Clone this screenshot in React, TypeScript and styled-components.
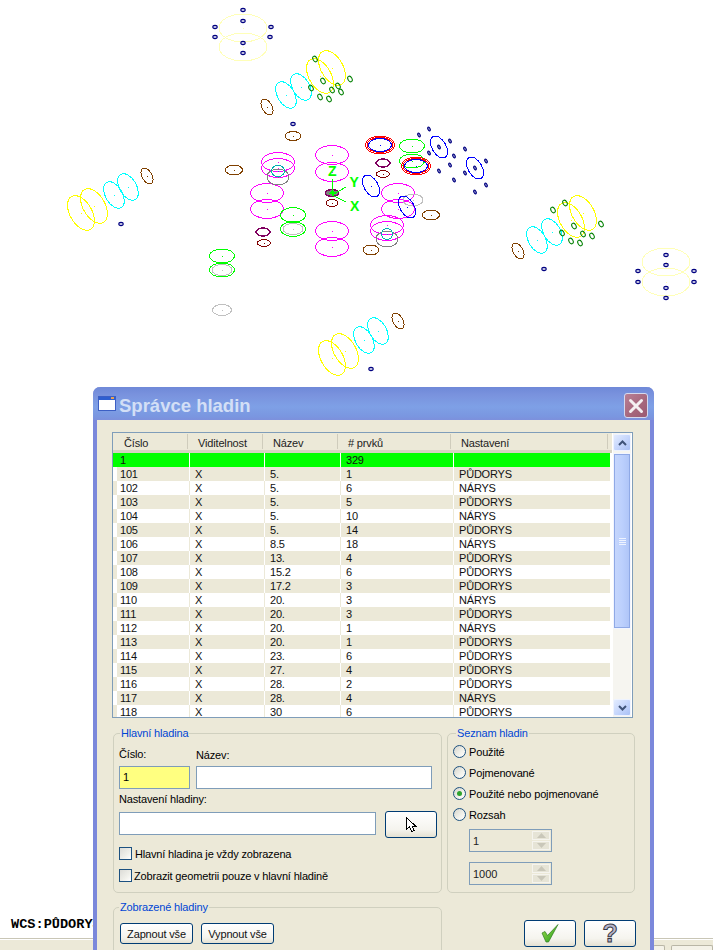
import styled, { createGlobalStyle } from "styled-components";

const GlobalStyle = createGlobalStyle`
  html, body {
    margin: 0;
    padding: 0;
    background: #ffffff;
  }
  * {
    box-sizing: border-box;
  }
`;

const UI_FONT = `"Liberation Sans", Arial, sans-serif`;
const TAN = "#ece9d8";
const FIELD_BORDER = "#7f9db9";

const Screen = styled.div`
  position: relative;
  width: 713px;
  height: 950px;
  overflow: hidden;
  display: flex;
  flex-direction: column;
  background: #ffffff;
  font-family: ${UI_FONT};
`;

const Viewport = styled.div`
  position: relative;
  height: 938px;
  flex: none;
`;

const WcsLabel = styled.div`
  position: absolute;
  left: 11px;
  top: 917px;
  font-family: "Liberation Mono", monospace;
  font-weight: bold;
  font-size: 13.6px;
  line-height: 15px;
  color: #000000;
  white-space: nowrap;
`;

const TabStrip = styled.div`
  flex: 1;
  display: flex;
  align-items: flex-end;
  gap: 6px;
  padding-left: 653px;
  background: ${TAN};
  border-top: 1px solid #c9c6b6;
  box-shadow: inset 0 1px 0 #ffffff;
`;

const StripTab = styled.div<{ $width: number }>`
  width: ${({ $width }) => $width}px;
  height: 5px;
  border: 1px solid #b9b6a6;
  border-bottom: none;
  border-radius: 2px 2px 0 0;
  background: #f4f2e8;
`;

const Dialog = styled.div`
  position: absolute;
  left: 93px;
  top: 387px;
  width: 561px;
  height: 590px;
  display: flex;
  flex-direction: column;
  border: 4px solid #7b88db;
  border-top: none;
  border-radius: 7px 7px 0 0;
  background: ${TAN};
  color: #000000;
  font-size: 11px;
  letter-spacing: -0.16px;
`;

const TitleBar = styled.div`
  flex: none;
  height: 33px;
  margin: 0 -4px;
  padding: 0 6px 0 5px;
  display: flex;
  align-items: center;
  border-radius: 7px 7px 0 0;
  background: linear-gradient(180deg, #6f89d8 0%, #7a93de 25%, #7ea0e6 60%, #7a96e0 90%, #7d90dc 100%);
`;

const TitleText = styled.div`
  flex: 1;
  margin-left: 3px;
  padding-top: 5px;
  font-size: 18.5px;
  font-weight: bold;
  letter-spacing: 0;
  color: #d3dff6;
`;

const CloseButton = styled.div`
  width: 24px;
  height: 25px;
  margin-top: 4px;
  display: flex;
  align-items: center;
  justify-content: center;
  border: 1px solid #d5d9ee;
  border-radius: 3px;
  background: linear-gradient(135deg, #b98095 0%, #a5667c 60%, #9a5a72 100%);
`;

const Body = styled.div`
  flex: 1;
  padding: 12px 17px 0 15px;
  display: flex;
  flex-direction: column;
`;

const ListPane = styled.div`
  flex: none;
  height: 286px;
  display: flex;
  border: 1px solid ${FIELD_BORDER};
  background: #ffffff;
`;

const ListTable = styled.div`
  flex: none;
  width: 499px;
  display: flex;
  flex-direction: column;
  overflow: hidden;
`;

const ListHead = styled.div`
  flex: none;
  height: 20px;
  display: grid;
  grid-template-columns: 75px 75px 75px 113px 157px;
  background: ${TAN};
  border-bottom: 3px solid #d6d3c3;
`;

const HeadCell = styled.div<{ $pad: number }>`
  height: 15px;
  margin-top: 1px;
  padding-left: ${({ $pad }) => $pad}px;
  padding-top: 2px;
  font-size: 11px;
  line-height: 14px;
  color: #222222;
  border-right: 1px solid #cfccbc;
`;

const ListRows = styled.div`
  flex: 1;
  overflow: hidden;
`;

const Row = styled.div<{ $bg: string; $sep: string; $lead: string }>`
  height: 14px;
  width: 497px;
  display: grid;
  grid-template-columns: 76px 75px 76px 113px 157px;
  background: ${({ $bg }) => $bg};
  font-size: 11px;
  letter-spacing: -0.2px;
  line-height: 14px;
  color: #111111;
  & > div {
    border-left: 1px solid ${({ $sep }) => $sep};
    padding-left: 5px;
    white-space: nowrap;
  }
  & > div:first-child {
    border-left: 4px solid ${({ $lead }) => $lead};
    padding-left: 3px;
  }
`;

const ScrollBar = styled.div`
  flex: 1;
  margin-left: 1px;
  margin-right: 1px;
  padding: 1px 0;
  display: flex;
  flex-direction: column;
  background: #f6f5f0;
`;

const ScrollButton = styled.div`
  flex: none;
  height: 17px;
  display: flex;
  align-items: center;
  justify-content: center;
  border: 1px solid #eef3ff;
  border-radius: 2px;
  background: linear-gradient(135deg, #e2ebfe 0%, #c4d5fc 55%, #a9c0f5 100%);
`;

const ScrollThumb = styled.div`
  flex: none;
  height: 176px;
  margin-top: 2px;
  display: flex;
  flex-direction: column;
  align-items: center;
  justify-content: center;
  gap: 1px;
  border: 1px solid #f2f5ff;
  outline: 1px solid #8fa9e6;
  outline-offset: -2px;
  background: linear-gradient(90deg, #c6d6fc 0%, #bcd0fd 50%, #aec4f7 100%);
`;

const GripLine = styled.div`
  width: 7px;
  height: 1px;
  background: #eef3ff;
`;

const ScrollTrack = styled.div`
  flex: 1;
`;

const GroupRow = styled.div`
  flex: none;
  margin-top: 15px;
  padding-left: 1px;
  display: grid;
  grid-template-columns: 329px 188px;
  column-gap: 5px;
`;

const Group = styled.div<{ $height: number }>`
  position: relative;
  height: ${({ $height }) => $height}px;
  border: 1px solid #d0d0bf;
  border-radius: 5px;
`;

const GroupTitle = styled.div<{ $left: number }>`
  position: absolute;
  top: -8px;
  left: ${({ $left }) => $left}px;
  padding: 0 1px;
  background: ${TAN};
  color: #0046d5;
  line-height: 14px;
  white-space: nowrap;
`;

const MainGroupBody = styled.div`
  padding: 13px 0 0 5px;
  display: flex;
  flex-direction: column;
`;

const NameGrid = styled.div`
  display: grid;
  grid-template-columns: 71px 236px;
  column-gap: 6px;
`;

const FieldLabel = styled.div<{ $top?: number }>`
  height: 19px;
  padding-top: ${({ $top }) => $top ?? 0}px;
  line-height: 14px;
  white-space: nowrap;
`;

const TextField = styled.div<{ $bg?: string }>`
  height: 23px;
  padding-left: 3px;
  border: 1px solid ${FIELD_BORDER};
  background: ${({ $bg }) => $bg ?? "#ffffff"};
  line-height: 21px;
`;

const SettingsLabel = styled.div`
  margin-top: 3px;
  height: 20px;
  line-height: 14px;
`;

const SettingsRow = styled.div`
  display: flex;
  align-items: flex-start;
  gap: 9px;
  height: 27px;
  margin-top: -1px;
  & > ${TextField} {
    width: 257px;
    margin-top: 1px;
  }
`;

const XpButton = styled.div<{ $width: number; $height: number }>`
  width: ${({ $width }) => $width}px;
  height: ${({ $height }) => $height}px;
  flex: none;
  display: flex;
  align-items: center;
  justify-content: center;
  border: 1px solid #003c74;
  border-radius: 3px;
  background: linear-gradient(180deg, #ffffff 0%, #f5f4ee 70%, #e4e1d2 100%);
  color: #111111;
  white-space: nowrap;
`;

const HelpGlyph = styled.span`
  font-size: 25px;
  font-weight: bold;
  line-height: 25px;
  color: #b4b4cc;
  -webkit-text-stroke: 1px #3a3a44;
`;

const CheckList = styled.div`
  margin-top: 9px;
  display: flex;
  flex-direction: column;
  gap: 9px;
`;

const CheckRow = styled.div<{ $gap: number }>`
  height: 13px;
  display: flex;
  align-items: center;
  gap: ${({ $gap }) => $gap}px;
  white-space: nowrap;
`;

const CheckBox = styled.div`
  width: 13px;
  height: 13px;
  flex: none;
  border: 1px solid #1c5180;
  background: linear-gradient(135deg, #dcdcd7 0%, #f0f0ea 60%, #ffffff 100%);
`;

const ListGroupBody = styled.div`
  padding: 7px 0 0 5px;
  display: flex;
  flex-direction: column;
`;

const RadioRow = styled.div`
  height: 21px;
  display: flex;
  align-items: center;
  gap: 3px;
  white-space: nowrap;
`;

const RadioDot = styled.div<{ $on?: boolean }>`
  width: 13px;
  height: 13px;
  flex: none;
  display: flex;
  align-items: center;
  justify-content: center;
  border: 1px solid #1c5180;
  border-radius: 50%;
  background: linear-gradient(135deg, #d4d4cc 0%, #f2f2ec 60%, #ffffff 100%);
  &::after {
    content: "";
    display: ${({ $on }) => ($on ? "block" : "none")};
    width: 5px;
    height: 5px;
    border-radius: 50%;
    background: #2ea32e;
  }
`;

const SpinStack = styled.div`
  margin: 4px 0 0 16px;
  display: flex;
  flex-direction: column;
  gap: 10px;
`;

const SpinField = styled.div`
  width: 83px;
  height: 23px;
  display: flex;
  align-items: center;
  padding: 1px;
  border: 1px solid ${FIELD_BORDER};
  letter-spacing: 0;
  color: #222222;
`;

const SpinValue = styled.div`
  flex: 1;
  padding-left: 2px;
`;

const SpinButtons = styled.div`
  width: 18px;
  height: 19px;
  display: flex;
  flex-direction: column;
  gap: 1px;
`;

const SpinButton = styled.div`
  flex: 1;
  display: flex;
  align-items: center;
  justify-content: center;
  border: 1px solid #f5f4ee;
  background: #e6e4d6;
`;

const BottomRow = styled.div`
  flex: none;
  margin-top: 14px;
  padding-left: 1px;
  display: grid;
  grid-template-columns: 329px 188px;
  column-gap: 5px;
`;

const ToggleRow = styled.div`
  padding: 15px 0 0 6px;
  display: flex;
  gap: 8px;
`;

const ActionRow = styled.div`
  padding: 13px 0 0 77px;
  display: flex;
  gap: 8px;
`;

// cad drawing data, all in screen pixels
type Oval = [number, number, number, number, string, number?];

const YELLOW = "#ffff00";
const PALE = "#ffffb8";
const CYAN = "#00ffff";
const BROWN = "#804000";
const MAGENTA = "#ff00ff";
const LIME = "#00ff00";
const NAVY = "#000080";
const GREEN = "#008000";
const GREY = "#c0c0c0";
const MID = "#808080";
const TEAL = "#00b0b0";
const PURPLE = "#800060";
const MAROON = "#800000";
const RED = "#ff0000";
const BLUE = "#0000ff";

const bigTilted = (cx: number, cy: number, c: string): Oval => [cx, cy, 11, 19, c, -30];
const midTilted = (cx: number, cy: number, c: string): Oval => [cx, cy, 8.5, 14.5, c, -30];
const smallTilted = (cx: number, cy: number, c: string): Oval => [cx, cy, 5, 8.7, c, -30];
const blueTilted = (cx: number, cy: number): Oval => [cx, cy, 7, 12, BLUE, -30];

const OVALS: Oval[] = [
  [243, 28, 24, 14, PALE],
  [243, 47, 24, 14, PALE],
  [666, 262, 24, 14, PALE],
  [666, 282, 24, 14, PALE],
  bigTilted(332, 68, YELLOW),
  bigTilted(320, 76, YELLOW),
  midTilted(286, 95, CYAN),
  midTilted(301, 87, CYAN),
  smallTilted(267, 107, BROWN),
  bigTilted(81, 213, YELLOW),
  bigTilted(94, 206, YELLOW),
  midTilted(114, 195, CYAN),
  midTilted(128, 187, CYAN),
  smallTilted(147, 176, BROWN),
  bigTilted(332, 358, YELLOW),
  bigTilted(345, 351, YELLOW),
  midTilted(364, 340, CYAN),
  midTilted(378, 331, CYAN),
  smallTilted(398, 321, BROWN),
  bigTilted(571, 220, YELLOW),
  bigTilted(583, 213, YELLOW),
  midTilted(537, 240, CYAN),
  midTilted(552, 232, CYAN),
  smallTilted(518, 251, BROWN),
  [293, 136, 8, 4.5, BROWN],
  [234, 170, 8.5, 5, BROWN],
  [431, 215, 8.5, 5, BROWN],
  [371, 250, 8, 5, BROWN],
  [278, 162, 16.5, 9.5, MAGENTA],
  [278, 168, 16.5, 9.5, MAGENTA],
  [267, 193, 16.5, 9.5, MAGENTA],
  [267, 209, 16.5, 9.5, MAGENTA],
  [332, 155, 16.5, 9.5, MAGENTA],
  [332, 172, 16.5, 9.5, MAGENTA],
  [332, 231, 16.5, 9.5, MAGENTA],
  [332, 247, 16.5, 9.5, MAGENTA],
  [398, 193, 16.5, 9.5, MAGENTA],
  [398, 209, 16.5, 9.5, MAGENTA],
  [387, 225, 16.5, 9.5, MAGENTA],
  [387, 231, 16.5, 9.5, MAGENTA],
  [278, 177, 11, 8, MID],
  [278, 171, 6.5, 5.5, TEAL],
  [387, 239, 11, 8, MID],
  [387, 234, 5.5, 5.5, TEAL],
  [293, 215, 12.5, 7.5, LIME],
  [293, 229, 12.5, 7.5, LIME],
  [293, 229, 10, 5.5, GREY],
  [222, 256, 12.5, 7, LIME],
  [222, 270, 12.5, 7, LIME],
  [222, 270, 10, 5.5, GREY],
  [222, 310, 9.5, 5.5, GREY],
  [412, 146, 12.5, 7, LIME],
  [412, 161, 12.5, 7, LIME],
  [413, 200, 10, 6, GREY],
  [264, 243, 6.5, 3.5, MAROON],
  [383, 174, 6.5, 3.5, MAROON],
  [332, 203, 6, 3.5, MAROON],
  [380, 145, 14.5, 9, RED],
  [380, 145, 13, 7.5, RED],
  [380, 145, 11.5, 6.5, BLUE],
  [416, 166, 14.5, 9, RED],
  [416, 166, 13, 7.5, RED],
  [416, 166, 11.5, 6.5, BLUE],
  blueTilted(439, 147),
  blueTilted(475, 168),
  blueTilted(371, 186),
  blueTilted(407, 207),
];

const THICK: Oval[] = [
  [263, 232, 7, 4, PURPLE],
  [383, 163, 7, 4, PURPLE],
];

const EYES: [number, number][] = [
  [243, 10], [243, 21], [215, 27], [271, 27], [215, 37], [270, 37], [243, 43], [243, 53],
  [666, 255], [666, 265], [638, 271], [694, 271], [638, 282], [694, 282], [666, 288], [666, 298],
  [293, 124], [121, 224], [371, 369], [544, 269],
];

const SEEDS: [number, number][] = [
  [315, 59], [350, 79], [323, 81], [311, 88], [332, 90], [338, 86], [341, 92], [320, 97], [329, 99],
  [565, 203], [553, 210], [601, 224], [574, 226], [562, 233], [583, 234], [592, 236], [571, 241], [580, 243],
];

const BOLTS: [number, number][] = [
  [429, 129], [419, 135], [450, 141], [429, 153], [454, 156], [465, 149], [450, 165], [486, 161],
  [439, 171], [465, 173], [454, 180], [486, 185], [475, 192], [439, 147], [475, 168],
];

const CadDrawing = () => (
  <svg width="713" height="938" viewBox="0 0 713 938" shapeRendering="crispEdges" style={{ display: "block" }}>
    {OVALS.map(([cx, cy, rx, ry, color, tilt], i) => (
      <g key={i}>
        <ellipse
          cx={cx}
          cy={cy}
          rx={rx}
          ry={ry}
          fill="none"
          stroke={color}
          transform={tilt ? `rotate(${tilt} ${cx} ${cy})` : undefined}
        />
        <rect x={Math.round(cx)} y={Math.round(cy)} width="1" height="1" fill={color} />
      </g>
    ))}
    {THICK.map(([cx, cy, rx, ry, color], i) => (
      <ellipse key={i} cx={cx} cy={cy} rx={rx} ry={ry} fill="none" stroke={color} strokeWidth="1.5" />
    ))}
    <g shapeRendering="auto">
      {EYES.map(([cx, cy], i) => (
        <ellipse key={i} cx={cx} cy={cy} rx="2.2" ry="1.6" fill="#d0d0e8" stroke={NAVY} strokeWidth="1.1" />
      ))}
      {SEEDS.map(([cx, cy], i) => (
        <ellipse key={i} cx={cx} cy={cy} rx="2" ry="3" fill="none" stroke={GREEN} transform={`rotate(-30 ${cx} ${cy})`} />
      ))}
      {BOLTS.map(([cx, cy], i) => (
        <ellipse key={i} cx={cx} cy={cy} rx="1.2" ry="2" fill="#8080c0" stroke={NAVY} transform={`rotate(-30 ${cx} ${cy})`} />
      ))}
    </g>
    <ellipse cx="332" cy="193" rx="6.5" ry="3.5" fill={MID} stroke={PURPLE} strokeWidth="1.5" />
    <path d="M332 179V195M332 195L346 187M332 195L346 202" fill="none" stroke={LIME} />
    <path d="M332 190L329 194H336Z" fill={LIME} />
    <text x="328" y="175.5" fill={LIME} fontFamily={UI_FONT} fontWeight="bold" fontSize="14">Z</text>
    <text x="349.5" y="187" fill={LIME} fontFamily={UI_FONT} fontWeight="bold" fontSize="14">Y</text>
    <text x="350" y="211" fill={LIME} fontFamily={UI_FONT} fontWeight="bold" fontSize="14">X</text>
  </svg>
);

const WindowIcon = () => (
  <svg width="18" height="15" viewBox="0 0 18 15">
    <rect x="0.5" y="0.5" width="17" height="14" fill="#ffffff" stroke="#3c5fc4" />
    <rect x="1" y="1" width="16" height="3" fill="#2f5fd0" />
    <rect x="13" y="1" width="3" height="2" fill="#e8a050" />
  </svg>
);

const CloseIcon = () => (
  <svg width="16" height="16" viewBox="0 0 16 16">
    <path d="M2.5 2.5L13.5 13.5M13.5 2.5L2.5 13.5" stroke="#f4f0f2" strokeWidth="3" strokeLinecap="round" />
  </svg>
);

const Chevron = ({ down }: { down?: boolean }) => (
  <svg width="9" height="6" viewBox="0 0 9 6">
    <path d={down ? "M1 1L4.5 4.5L8 1" : "M1 5L4.5 1.5L8 5"} fill="none" stroke="#3f5378" strokeWidth="2" />
  </svg>
);

const SpinArrow = ({ down }: { down?: boolean }) => (
  <svg width="9" height="5" viewBox="0 0 9 5">
    <path d={down ? "M0 0H9L4.5 5Z" : "M0 5H9L4.5 0Z"} fill="#c9c7b9" />
  </svg>
);

const PickCursor = () => (
  <svg width="11" height="16" viewBox="0 0 11 16" shapeRendering="crispEdges">
    <path d="M0.5 0.5V12.5L3.5 9.5L5.5 14.5L8 13.5L6 9H9.5Z" fill="#ffffff" stroke="#000000" />
  </svg>
);

const OkIcon = () => (
  <svg width="18" height="19" viewBox="0 0 18 19">
    <defs>
      <linearGradient id="okFill" x1="0" y1="0" x2="1" y2="1">
        <stop offset="0" stopColor="#a4e04a" />
        <stop offset="1" stopColor="#1f9a1f" />
      </linearGradient>
    </defs>
    <path d="M1 9L4 7.5L6.5 11.5L17 0.5L7.5 18H5Z" fill="url(#okFill)" stroke="#2e7d20" strokeWidth="0.7" />
  </svg>
);

type LayerRow = [string, string, string, string];

const LAYERS: LayerRow[] = [
  ["101", "5.", "1", "PŮDORYS"],
  ["102", "5.", "6", "NÁRYS"],
  ["103", "5.", "5", "PŮDORYS"],
  ["104", "5.", "10", "NÁRYS"],
  ["105", "5.", "14", "PŮDORYS"],
  ["106", "8.5", "18", "NÁRYS"],
  ["107", "13.", "4", "PŮDORYS"],
  ["108", "15.2", "6", "PŮDORYS"],
  ["109", "17.2", "3", "PŮDORYS"],
  ["110", "20.", "3", "NÁRYS"],
  ["111", "20.", "3", "PŮDORYS"],
  ["112", "20.", "1", "NÁRYS"],
  ["113", "20.", "1", "PŮDORYS"],
  ["114", "23.", "6", "PŮDORYS"],
  ["115", "27.", "4", "PŮDORYS"],
  ["116", "28.", "2", "PŮDORYS"],
  ["117", "28.", "4", "NÁRYS"],
  ["118", "30", "6", "PŮDORYS"],
];

const COLUMNS: [string, number][] = [
  ["Číslo", 11],
  ["Viditelnost", 10],
  ["Název", 10],
  ["# prvků", 10],
  ["Nastavení", 10],
];

const RADIOS = ["Použité", "Pojmenované", "Použité nebo pojmenované", "Rozsah"];

export default function App() {
  return (
    <Screen>
      <GlobalStyle />
      <Viewport>
        <CadDrawing />
        <WcsLabel>WCS:PŮDORYS</WcsLabel>
      </Viewport>
      <TabStrip>
        <StripTab $width={12} />
        <StripTab $width={42} />
      </TabStrip>

      <Dialog>
        <TitleBar>
          <WindowIcon />
          <TitleText>Správce hladin</TitleText>
          <CloseButton>
            <CloseIcon />
          </CloseButton>
        </TitleBar>
        <Body>
          <ListPane>
            <ListTable>
              <ListHead>
                {COLUMNS.map(([label, pad]) => (
                  <HeadCell key={label} $pad={pad}>
                    {label}
                  </HeadCell>
                ))}
              </ListHead>
              <ListRows>
                <Row $bg="#00ff00" $sep="#ffffff" $lead="#00ff00">
                  <div>1</div>
                  <div />
                  <div />
                  <div>329</div>
                  <div />
                </Row>
                {LAYERS.map(([num, name, count, setting], i) => (
                  <Row
                    key={num}
                    $bg={i % 2 ? "#ffffff" : TAN}
                    $sep={i % 2 ? TAN : "#ffffff"}
                    $lead={i % 2 ? TAN : "#ffffff"}
                  >
                    <div>{num}</div>
                    <div>X</div>
                    <div>{name}</div>
                    <div>{count}</div>
                    <div>{setting}</div>
                  </Row>
                ))}
              </ListRows>
            </ListTable>
            <ScrollBar>
              <ScrollButton>
                <Chevron />
              </ScrollButton>
              <ScrollThumb>
                <GripLine />
                <GripLine />
                <GripLine />
                <GripLine />
              </ScrollThumb>
              <ScrollTrack />
              <ScrollButton>
                <Chevron down />
              </ScrollButton>
            </ScrollBar>
          </ListPane>

          <GroupRow>
            <Group $height={160}>
              <GroupTitle $left={6}>Hlavní hladina</GroupTitle>
              <MainGroupBody>
                <NameGrid>
                  <FieldLabel>Číslo:</FieldLabel>
                  <FieldLabel $top={1}>Název:</FieldLabel>
                  <TextField $bg="#ffff80">1</TextField>
                  <TextField />
                </NameGrid>
                <SettingsLabel>Nastavení hladiny:</SettingsLabel>
                <SettingsRow>
                  <TextField />
                  <XpButton $width={52} $height={27}>
                    <PickCursor />
                  </XpButton>
                </SettingsRow>
                <CheckList>
                  <CheckRow $gap={3}>
                    <CheckBox />
                    Hlavní hladina je vždy zobrazena
                  </CheckRow>
                  <CheckRow $gap={2}>
                    <CheckBox />
                    Zobrazit geometrii pouze v hlavní hladině
                  </CheckRow>
                </CheckList>
              </MainGroupBody>
            </Group>

            <Group $height={160}>
              <GroupTitle $left={8}>Seznam hladin</GroupTitle>
              <ListGroupBody>
                {RADIOS.map((label, i) => (
                  <RadioRow key={label}>
                    <RadioDot $on={i === 2} />
                    {label}
                  </RadioRow>
                ))}
                <SpinStack>
                  {["1", "1000"].map((value) => (
                    <SpinField key={value}>
                      <SpinValue>{value}</SpinValue>
                      <SpinButtons>
                        <SpinButton>
                          <SpinArrow />
                        </SpinButton>
                        <SpinButton>
                          <SpinArrow down />
                        </SpinButton>
                      </SpinButtons>
                    </SpinField>
                  ))}
                </SpinStack>
              </ListGroupBody>
            </Group>
          </GroupRow>

          <BottomRow>
            <Group $height={80}>
              <GroupTitle $left={5}>Zobrazené hladiny</GroupTitle>
              <ToggleRow>
                <XpButton $width={73} $height={21}>Zapnout vše</XpButton>
                <XpButton $width={73} $height={21}>Vypnout vše</XpButton>
              </ToggleRow>
            </Group>
            <ActionRow>
              <XpButton $width={52} $height={27}>
                <OkIcon />
              </XpButton>
              <XpButton $width={52} $height={27}>
                <HelpGlyph>?</HelpGlyph>
              </XpButton>
            </ActionRow>
          </BottomRow>
        </Body>
      </Dialog>
    </Screen>
  );
}
